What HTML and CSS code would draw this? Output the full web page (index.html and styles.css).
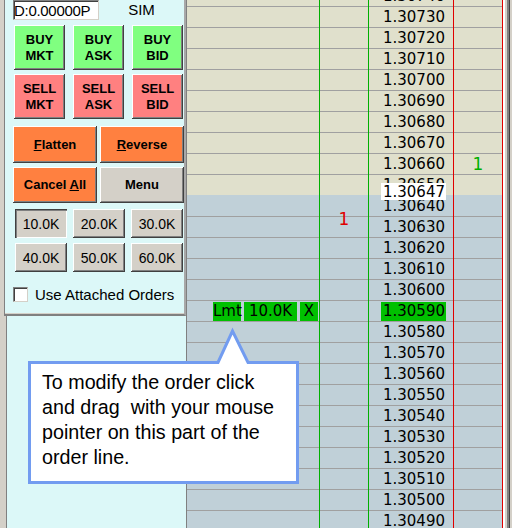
FILE: index.html
```html
<!DOCTYPE html>
<html>
<head>
<meta charset="utf-8">
<link rel="stylesheet" href="styles.css">
</head>
<body>
<div class="app">
  <aside class="side">
    <div class="upper">
      <div class="acct">
        <div class="acct-box">D:0.00000P</div>
        <div class="acct-mode">SIM</div>
      </div>
      <div class="trade">
        <div class="btn buy">BUY<br>MKT</div>
        <div class="btn buy">BUY<br>ASK</div>
        <div class="btn buy">BUY<br>BID</div>
        <div class="btn sell">SELL<br>MKT</div>
        <div class="btn sell">SELL<br>ASK</div>
        <div class="btn sell">SELL<br>BID</div>
      </div>
      <div class="actions">
        <div class="btn orange"><span><u>F</u>latten</span></div>
        <div class="btn orange"><span><u>R</u>everse</span></div>
        <div class="btn orange"><span>Cancel <u>A</u>ll</span></div>
        <div class="btn gray">Menu</div>
      </div>
      <div class="sizes">
        <div class="size pressed">10.0K</div>
        <div class="size">20.0K</div>
        <div class="size">30.0K</div>
        <div class="size">40.0K</div>
        <div class="size">50.0K</div>
        <div class="size">60.0K</div>
      </div>
      <div class="attach">
        <span class="check"></span>
        <span>Use Attached Orders</span>
      </div>
    </div>
    <div class="lower"></div>
  </aside>
  <main class="ladder">
    <div class="rows">
      <div class="row"><div class="cell ca"></div><div class="cell cb"></div><div class="cell cc"><span class="v">1.30740</span></div><div class="cell cd"></div></div>
      <div class="row"><div class="cell ca"></div><div class="cell cb"></div><div class="cell cc"><span class="v">1.30730</span></div><div class="cell cd"></div></div>
      <div class="row"><div class="cell ca"></div><div class="cell cb"></div><div class="cell cc"><span class="v">1.30720</span></div><div class="cell cd"></div></div>
      <div class="row"><div class="cell ca"></div><div class="cell cb"></div><div class="cell cc"><span class="v">1.30710</span></div><div class="cell cd"></div></div>
      <div class="row"><div class="cell ca"></div><div class="cell cb"></div><div class="cell cc"><span class="v">1.30700</span></div><div class="cell cd"></div></div>
      <div class="row"><div class="cell ca"></div><div class="cell cb"></div><div class="cell cc"><span class="v">1.30690</span></div><div class="cell cd"></div></div>
      <div class="row"><div class="cell ca"></div><div class="cell cb"></div><div class="cell cc"><span class="v">1.30680</span></div><div class="cell cd"></div></div>
      <div class="row"><div class="cell ca"></div><div class="cell cb"></div><div class="cell cc"><span class="v">1.30670</span></div><div class="cell cd"></div></div>
      <div class="row"><div class="cell ca"></div><div class="cell cb"></div><div class="cell cc"><span class="v">1.30660</span></div><div class="cell cd"><span class="qty ask-qty">1</span></div></div>
      <div class="row edge"><div class="cell ca"></div><div class="cell cb"></div><div class="cell cc"><span class="v">1.30650</span></div><div class="cell cd"></div></div>
      <div class="row bid"><div class="cell ca"></div><div class="cell cb"></div><div class="cell cc"><span class="v">1.30640</span></div><div class="cell cd"></div></div>
      <div class="row bid"><div class="cell ca"></div><div class="cell cb"><span class="qty bid-qty">1</span></div><div class="cell cc"><span class="v">1.30630</span></div><div class="cell cd"></div></div>
      <div class="row bid"><div class="cell ca"></div><div class="cell cb"></div><div class="cell cc"><span class="v">1.30620</span></div><div class="cell cd"></div></div>
      <div class="row bid"><div class="cell ca"></div><div class="cell cb"></div><div class="cell cc"><span class="v">1.30610</span></div><div class="cell cd"></div></div>
      <div class="row bid"><div class="cell ca"></div><div class="cell cb"></div><div class="cell cc"><span class="v">1.30600</span></div><div class="cell cd"></div></div>
      <div class="row bid"><div class="cell ca"><span class="tag tag-type">Lmt</span><span class="tag tag-qty">10.0K</span><span class="tag tag-x">X</span></div><div class="cell cb"></div><div class="cell cc"><span class="v hl">1.30590</span></div><div class="cell cd"></div></div>
      <div class="row bid"><div class="cell ca"></div><div class="cell cb"></div><div class="cell cc"><span class="v">1.30580</span></div><div class="cell cd"></div></div>
      <div class="row bid"><div class="cell ca"></div><div class="cell cb"></div><div class="cell cc"><span class="v">1.30570</span></div><div class="cell cd"></div></div>
      <div class="row bid"><div class="cell ca"></div><div class="cell cb"></div><div class="cell cc"><span class="v">1.30560</span></div><div class="cell cd"></div></div>
      <div class="row bid"><div class="cell ca"></div><div class="cell cb"></div><div class="cell cc"><span class="v">1.30550</span></div><div class="cell cd"></div></div>
      <div class="row bid"><div class="cell ca"></div><div class="cell cb"></div><div class="cell cc"><span class="v">1.30540</span></div><div class="cell cd"></div></div>
      <div class="row bid"><div class="cell ca"></div><div class="cell cb"></div><div class="cell cc"><span class="v">1.30530</span></div><div class="cell cd"></div></div>
      <div class="row bid"><div class="cell ca"></div><div class="cell cb"></div><div class="cell cc"><span class="v">1.30520</span></div><div class="cell cd"></div></div>
      <div class="row bid"><div class="cell ca"></div><div class="cell cb"></div><div class="cell cc"><span class="v">1.30510</span></div><div class="cell cd"></div></div>
      <div class="row bid"><div class="cell ca"></div><div class="cell cb"></div><div class="cell cc"><span class="v">1.30500</span></div><div class="cell cd"></div></div>
      <div class="row bid"><div class="cell ca"></div><div class="cell cb"></div><div class="cell cc"><span class="v">1.30490</span></div><div class="cell cd"></div></div>
    </div>
    <div class="strip"></div>
    <div class="last-price">1.30647</div>
  </main>
</div>
<div class="callout">
  <svg class="callout-shape" width="272" height="159" viewBox="0 0 272 159">
    <path d="M1.5 36.5 H190 L204.5 5 L220 36.5 H269.5 V156.5 H1.5 Z" fill="#fff" stroke="#729cf0" stroke-width="3" stroke-miterlimit="10"/>
  </svg>
  <div class="callout-text">To modify the order click
and drag  with your mouse
pointer on this part of the
order line.</div>
</div>
</body>
</html>
```

FILE: styles.css
```css
html, body {
  margin: 0;
  padding: 0;
  overflow: hidden;
}

body {
  width: 512px;
  height: 528px;
  position: relative;
  font-family: "Liberation Sans", Arial, sans-serif;
  color: #000;
}

.app {
  display: flex;
  height: 528px;
}

/* ---------- left panel ---------- */
.side {
  width: 187px;
  flex: none;
  box-sizing: border-box;
  border-left: 4px solid #d4d0c8;
  border-right: 1px solid #808080;
  display: flex;
  flex-direction: column;
  background: #dcf8f8;
}

.upper {
  height: 316px;
  flex: none;
  box-sizing: border-box;
  border-left: 1px solid #808080;
  border-right: 2px solid #a8a8a8;
  border-bottom: 2px solid #808080;
  box-shadow: inset 0 -1px #d4d0c8;
}

.lower {
  flex: 1;
  border-left: 2px solid #d4d0c8;
  box-shadow: inset 1px 0 #808080;
}

.acct {
  display: flex;
  height: 20px;
}

.acct-box {
  margin-left: 8px;
  width: 86px;
  box-sizing: border-box;
  background: #fff;
  border: 1px solid;
  border-color: #808080 #d4d0c8 #d4d0c8 #808080;
  box-shadow: inset 1px 1px #404040;
  font-size: 15px;
  line-height: 18px;
  padding-top: 1px;
  letter-spacing: -0.3px;
  white-space: nowrap;
  overflow: hidden;
}

.acct-mode {
  flex: 1;
  text-align: center;
  font-size: 15px;
  line-height: 20px;
}

.btn {
  display: flex;
  align-items: center;
  justify-content: center;
  text-align: center;
  font-weight: bold;
  font-size: 13px;
  line-height: 16px;
  box-shadow: inset -1px -1px #404040, inset 1px 1px #ffffff, inset -2px -2px #808080;
}

.buy { background: #80ff80; }
.sell { background: #ff8080; }
.orange { background: #ff8040; }
.gray { background: #d4d0c8; }

.trade {
  display: grid;
  grid-template-columns: repeat(3, 51px);
  grid-auto-rows: 45px;
  gap: 4px 8px;
  margin: 5px 0 0 9px;
}

.actions {
  display: grid;
  grid-template-columns: 84px 84px;
  grid-template-rows: 37px 36px;
  gap: 4px 3px;
  margin: 7px 0 0 8px;
}

.sizes {
  display: grid;
  grid-template-columns: repeat(3, 52px);
  grid-auto-rows: 29px;
  gap: 5px 6px;
  margin: 6px 0 0 10px;
}

.size {
  display: flex;
  align-items: center;
  justify-content: center;
  background: #d4d0c8;
  font-size: 14px;
  box-shadow: inset -1px -1px #404040, inset 1px 1px #ffffff, inset -2px -2px #808080;
}

.size.pressed {
  box-shadow: inset 1px 1px #404040, inset 2px 2px #808080, inset -1px -1px #ffffff;
}

.attach {
  display: flex;
  align-items: center;
  gap: 7px;
  margin: 15px 0 0 8px;
  font-size: 15px;
  line-height: 15px;
}

.check {
  width: 15px;
  height: 15px;
  box-sizing: border-box;
  background: #fff;
  border: 1px solid;
  border-color: #808080 #d4d0c8 #d4d0c8 #808080;
  box-shadow: inset 1px 1px #404040;
}

/* ---------- price ladder ---------- */
.ladder {
  flex: 1;
  display: flex;
  position: relative;
  overflow: hidden;
  font-family: "DejaVu Sans", Verdana, sans-serif;
  font-size: 15px;
}

.rows {
  width: 316px;
  flex: none;
  margin-top: -14px;
}

.row {
  display: flex;
  height: 21px;
  background: linear-gradient(#a0a0a0, #a0a0a0) bottom / 100% 1px no-repeat #e0e0cc;
}

.row.edge {
  background: linear-gradient(#c0d0d8, #c0d0d8) bottom / 100% 1px no-repeat #e0e0cc;
}

.row.bid {
  background-color: #c0d0d8;
}

.cell {
  height: 21px;
  box-sizing: border-box;
  border-right: 1px solid #00b000;
  display: flex;
  justify-content: flex-end;
  align-items: flex-start;
  white-space: nowrap;
}

.ca { width: 133px; padding-right: 1px; }
.cb { width: 49px; justify-content: center; }
.cc { width: 85px; padding-right: 7px; border-right-color: #e00000; }
.cd { width: 49px; justify-content: center; border-right-color: #e00000; }

.v {
  margin-top: 1px;
  height: 19px;
  line-height: 19px;
  padding: 0 1px 0 2px;
}

.v.hl { background: #00c000; }

.tag {
  margin-top: 1px;
  margin-left: 3px;
  height: 19px;
  line-height: 19px;
  background: #00c000;
  text-align: center;
}

.tag-type { width: 28px; }
.tag-qty { width: 53px; }
.tag-x { width: 18px; }

.qty {
  margin-top: 1px;
  line-height: 19px;
  font-size: 17px;
}

.ask-qty { color: #00b000; }

.bid-qty {
  color: #e00000;
  position: relative;
  top: -8px;
}

.strip {
  width: 9px;
  flex: none;
  background: linear-gradient(to right, #ffffff 0 2px, #d4d0c8 2px 4px, #808080 4px 6px, #404040 6px 7px, #d4d0c8 7px 9px);
}

.last-price {
  position: absolute;
  left: 194px;
  top: 183px;
  width: 65px;
  height: 17px;
  box-sizing: border-box;
  padding: 1px 1px 0 0;
  background: #fff;
  text-align: right;
  line-height: 16px;
}

/* ---------- callout ---------- */
.callout {
  position: absolute;
  left: 28px;
  top: 326px;
  width: 272px;
  height: 159px;
}

.callout-shape {
  position: absolute;
  left: 0;
  top: 0;
}

.callout-text {
  position: absolute;
  left: 14px;
  top: 44px;
  font-family: "Liberation Sans", Arial, sans-serif;
  font-size: 19.7px;
  line-height: 25px;
  white-space: pre;
  color: #000;
}
```
